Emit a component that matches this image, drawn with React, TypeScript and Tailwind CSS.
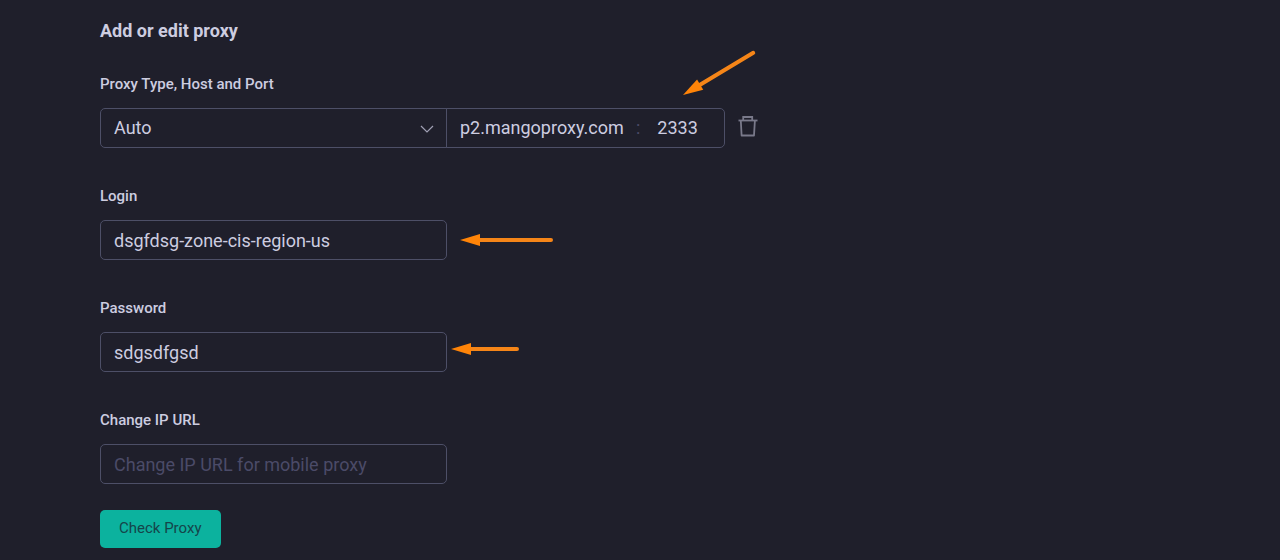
import { useState } from "react";
import type { InputHTMLAttributes, ReactNode } from "react";

const labelClass = "block text-[15px] leading-5 font-medium";
const boxClass =
  "h-10 w-full rounded-[5px] border border-[#4d4f67] bg-transparent px-[13px] text-lg outline-none placeholder:text-[#4b4b68] focus:border-[#7a7a9c]";

// Arrow with its tip at the left edge
const Arrow = ({ length, className }: { length: number; className: string }) => (
  <svg
    width={length}
    height="14"
    viewBox={`0 0 ${length} 14`}
    className={`pointer-events-none absolute ${className}`}
    aria-hidden="true"
  >
    <path
      d={`M17 7H${length - 2}`}
      stroke="#f58518"
      strokeWidth="4"
      strokeLinecap="round"
    />
    <path d="M0 7L20 1V13Z" fill="#ff8408" />
  </svg>
);

const TrashIcon = () => (
  <svg
    width="20"
    height="22"
    viewBox="0 0 20 22"
    fill="none"
    stroke="currentColor"
    strokeWidth="1.8"
    aria-hidden="true"
  >
    <path d="M0.5 5.5H19.5" />
    <path d="M5.2 5.5V2H14.2V5.5" />
    <path d="M2.8 5.5L3.6 20.5H16L16.9 5.5" strokeLinejoin="round" />
  </svg>
);

type FieldProps = InputHTMLAttributes<HTMLInputElement> & {
  id: string;
  label: string;
  children?: ReactNode;
};

const Field = ({ id, label, children, ...props }: FieldProps) => (
  <div>
    <label htmlFor={id} className={labelClass}>
      {label}
    </label>
    <div className="relative mt-[14px] w-full max-w-[347px]">
      <input id={id} type="text" className={boxClass} {...props} />
      {children}
    </div>
  </div>
);

export default function App() {
  const [host, setHost] = useState("p2.mangoproxy.com");
  const [port, setPort] = useState("2333");

  return (
    <main className="min-h-screen overflow-hidden bg-[#1f1f2b] px-[100px] pt-5 pb-3 font-[Roboto,sans-serif] text-[#cdcde0]">
      <h1 className="text-lg leading-[22px] font-bold">Add or edit proxy</h1>

      <form
        className="mt-8 flex flex-col gap-[38px]"
        onSubmit={(e) => e.preventDefault()}
      >
        {/* Type, host and port */}
        <div>
          <label htmlFor="proxy-type" className={labelClass}>
            Proxy Type, Host and Port
          </label>
          <div className="mt-[14px] flex items-center">
            <div className="relative w-full max-w-[347px]">
              <select
                id="proxy-type"
                className="block h-10 w-full appearance-none rounded-l-[5px] border border-[#4d4f67] bg-transparent px-[13px] text-lg outline-none"
              >
                <option>Auto</option>
                <option>HTTP</option>
                <option>SOCKS5</option>
              </select>
              <svg
                width="14"
                height="8"
                viewBox="0 0 14 8"
                fill="none"
                stroke="#a0a0b4"
                strokeWidth="1.2"
                className="pointer-events-none absolute top-[17px] right-[13px]"
                aria-hidden="true"
              >
                <path d="M1 1L7 7L13 1" />
              </svg>
            </div>

            <div className="relative -ml-px flex h-10 w-[279px] shrink-0 items-center rounded-r-[5px] border border-[#4d4f67] text-lg">
              <input
                aria-label="Host"
                value={host}
                onChange={(e) => setHost(e.target.value)}
                className="w-[189px] bg-transparent pl-[13px] outline-none"
              />
              <span className="text-[#4b4b68]">:</span>
              <input
                aria-label="Port"
                value={port}
                onChange={(e) => setPort(e.target.value)}
                className="min-w-0 flex-1 bg-transparent px-[17px] outline-none"
              />
              <Arrow
                length={84}
                className="top-[-21px] left-[236px] origin-left rotate-[-31deg]"
              />
            </div>

            <button
              type="button"
              aria-label="Delete proxy"
              className="-mt-1 ml-[13px] text-[#79798a]"
            >
              <TrashIcon />
            </button>
          </div>
        </div>

        <Field id="login" label="Login" defaultValue="dsgfdsg-zone-cis-region-us">
          <Arrow length={93} className="top-[13px] left-[360px]" />
        </Field>

        <Field id="password" label="Password" defaultValue="sdgsdfgsd">
          <Arrow length={68} className="top-[10px] left-[351px]" />
        </Field>

        <Field
          id="change-ip"
          label="Change IP URL"
          placeholder="Change IP URL for mobile proxy"
        />

        <button
          type="submit"
          className="-mt-3 h-[38px] self-start rounded-[5px] bg-[#0cb29e] px-[19px] pb-[2px] text-[15px] text-[#15454a]"
        >
          Check Proxy
        </button>
      </form>
    </main>
  );
}
